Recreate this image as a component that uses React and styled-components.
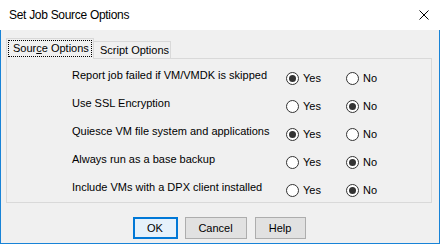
import React from "react";
import styled, { createGlobalStyle } from "styled-components";

const Global = createGlobalStyle`
  html, body { margin: 0; padding: 0; background: #ffffff; }
  body { font-family: "Liberation Sans", Arial, sans-serif; }
  * { box-sizing: border-box; }
`;

const Window = styled.div`
  width: 440px;
  height: 244px;
  display: flex;
  flex-direction: column;
  font-family: "Liberation Sans", Arial, sans-serif;
  color: #000;
`;

const TitleBar = styled.div`
  height: 30px;
  flex: none;
  background: #ffffff;
  display: flex;
  align-items: center;
  padding: 0 11px 0 9px;
`;

const Title = styled.span`
  font-size: 12px;
  letter-spacing: -0.3px;
  line-height: 14px;
  padding-bottom: 1px;
`;

const CloseIcon = styled.svg`
  margin-left: auto;
  width: 10px;
  height: 10px;
  display: block;
`;

const Body = styled.div`
  flex: 1;
  background: #f0f0f0;
  border: 1px solid #1883d7;
  border-top: none;
  padding: 0 7px 0 5px;
  display: flex;
  flex-direction: column;
`;

const TabStrip = styled.div`
  margin-top: 8px;
  margin-bottom: -1px;
  display: flex;
  align-items: flex-end;
  position: relative;
  z-index: 1;
`;

const Tab = styled.div`
  font-size: 11px;
  line-height: 13px;
  white-space: nowrap;
  background: #f0f0f0;
  border: 1px solid #d9d9d9;
  border-bottom: none;
  display: flex;
  align-items: center;
  justify-content: ${(p) => (p.$active ? "stretch" : "center")};
  width: ${(p) => (p.$active ? "88px" : "77px")};
  height: ${(p) => (p.$active ? "21px" : "17px")};
  margin-bottom: ${(p) => (p.$active ? "0" : "1px")};
  border-left: ${(p) => (p.$active ? "1px solid #d9d9d9" : "none")};
  padding: ${(p) => (p.$active ? "1px 1px 2px 1px" : "0 0 0 5px")};
`;

const Focus = styled.span`
  display: flex;
  align-items: center;
  justify-content: flex-start;
  align-self: stretch;
  flex: 1;
  border: 1px dotted #000;
  padding-left: 4px;
  overflow: visible;
`;

const Panel = styled.div`
  height: 145px;
  border: 1px solid #d9d9d9;
  background: #f0f0f0;
  padding: 9px 0 0 65px;
  display: flex;
  flex-direction: column;
  gap: 8px;
`;

const Row = styled.div`
  display: grid;
  grid-template-columns: 214px 60px auto;
  align-items: center;
  font-size: 11px;
`;

const Label = styled.span`
  line-height: 14px;
  padding-bottom: 6px;
  white-space: nowrap;
`;

const Option = styled.label`
  display: flex;
  align-items: center;
  gap: 4px;
  height: 20px;
  line-height: 13px;
`;

const Circle = styled.span`
  width: 13px;
  height: 13px;
  border-radius: 50%;
  border: 1px solid #333333;
  background: #ffffff;
  display: flex;
  align-items: center;
  justify-content: center;
  flex: none;
`;

const Dot = styled.span`
  width: 7px;
  height: 7px;
  border-radius: 50%;
  background: #333333;
`;

const ButtonRow = styled.div`
  margin-top: 14px;
  display: flex;
  justify-content: center;
  gap: 7px;
`;

const Button = styled.div`
  width: ${(p) => p.$w}px;
  height: 22px;
  font-size: 11px;
  display: flex;
  align-items: center;
  justify-content: center;
  background: ${(p) => (p.$default ? "#e5f1fb" : "#e1e1e1")};
  border: ${(p) => (p.$default ? "2px solid #0078d7" : "1px solid #adadad")};
  margin-left: ${(p) => p.$ml || 0}px;
`;

const rows = [
  { label: "Report job failed if VM/VMDK is skipped", yes: true },
  { label: "Use SSL Encryption", yes: false },
  { label: "Quiesce VM file system and applications", yes: true },
  { label: "Always run as a base backup", yes: false },
  { label: "Include VMs with a DPX client installed", yes: false },
];

function Radio({ checked, children }) {
  return (
    <Option>
      <Circle>{checked && <Dot />}</Circle>
      <span>{children}</span>
    </Option>
  );
}

export default function App() {
  return (
    <>
      <Global />
      <Window>
        <TitleBar>
          <Title>Set Job Source Options</Title>
          <CloseIcon viewBox="0 0 10 10">
            <path d="M0.5 0.5 L9.5 9.5 M9.5 0.5 L0.5 9.5" stroke="#000" strokeWidth="1" fill="none" />
          </CloseIcon>
        </TitleBar>
        <Body>
          <TabStrip>
            <Tab $active>
              <Focus>
                Sour<u>c</u>e Options
              </Focus>
            </Tab>
            <Tab>Script Options</Tab>
          </TabStrip>
          <Panel>
            {rows.map((r) => (
              <Row key={r.label}>
                <Label>{r.label}</Label>
                <Radio checked={r.yes}>Yes</Radio>
                <Radio checked={!r.yes}>No</Radio>
              </Row>
            ))}
          </Panel>
          <ButtonRow>
            <Button $w={45} $default>OK</Button>
            <Button $w={62}>Cancel</Button>
            <Button $w={51} $ml={1}>Help</Button>
          </ButtonRow>
        </Body>
      </Window>
    </>
  );
}
